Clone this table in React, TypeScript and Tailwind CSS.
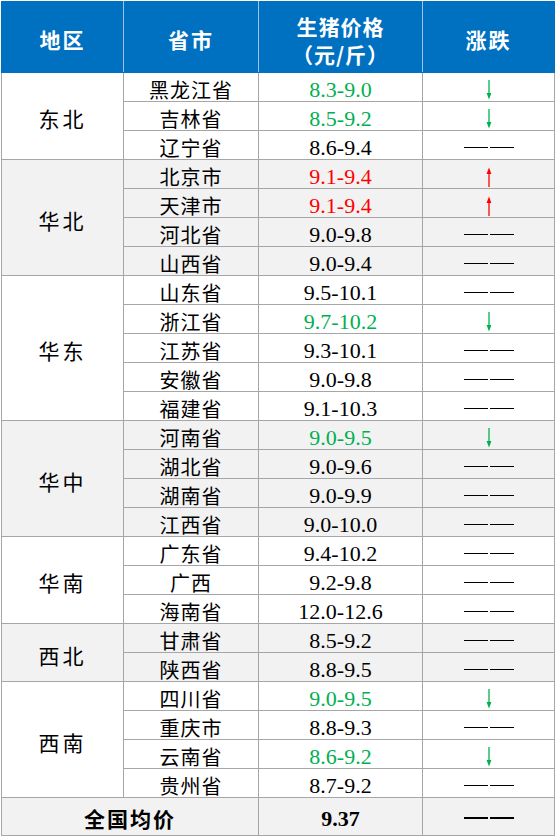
import React from "react";

type Trend = "up" | "down" | "flat";
type Row = { prov: string; price: string; trend: Trend };
type Group = { region: string; shaded: boolean; rows: Row[] };

const groups: Group[] = [
  {
    region: "东北",
    shaded: false,
    rows: [
      { prov: "黑龙江省", price: "8.3-9.0", trend: "down" },
      { prov: "吉林省", price: "8.5-9.2", trend: "down" },
      { prov: "辽宁省", price: "8.6-9.4", trend: "flat" },
    ],
  },
  {
    region: "华北",
    shaded: true,
    rows: [
      { prov: "北京市", price: "9.1-9.4", trend: "up" },
      { prov: "天津市", price: "9.1-9.4", trend: "up" },
      { prov: "河北省", price: "9.0-9.8", trend: "flat" },
      { prov: "山西省", price: "9.0-9.4", trend: "flat" },
    ],
  },
  {
    region: "华东",
    shaded: false,
    rows: [
      { prov: "山东省", price: "9.5-10.1", trend: "flat" },
      { prov: "浙江省", price: "9.7-10.2", trend: "down" },
      { prov: "江苏省", price: "9.3-10.1", trend: "flat" },
      { prov: "安徽省", price: "9.0-9.8", trend: "flat" },
      { prov: "福建省", price: "9.1-10.3", trend: "flat" },
    ],
  },
  {
    region: "华中",
    shaded: true,
    rows: [
      { prov: "河南省", price: "9.0-9.5", trend: "down" },
      { prov: "湖北省", price: "9.0-9.6", trend: "flat" },
      { prov: "湖南省", price: "9.0-9.9", trend: "flat" },
      { prov: "江西省", price: "9.0-10.0", trend: "flat" },
    ],
  },
  {
    region: "华南",
    shaded: false,
    rows: [
      { prov: "广东省", price: "9.4-10.2", trend: "flat" },
      { prov: "广西", price: "9.2-9.8", trend: "flat" },
      { prov: "海南省", price: "12.0-12.6", trend: "flat" },
    ],
  },
  {
    region: "西北",
    shaded: true,
    rows: [
      { prov: "甘肃省", price: "8.5-9.2", trend: "flat" },
      { prov: "陕西省", price: "8.8-9.5", trend: "flat" },
    ],
  },
  {
    region: "西南",
    shaded: false,
    rows: [
      { prov: "四川省", price: "9.0-9.5", trend: "down" },
      { prov: "重庆市", price: "8.8-9.3", trend: "flat" },
      { prov: "云南省", price: "8.6-9.2", trend: "down" },
      { prov: "贵州省", price: "8.7-9.2", trend: "flat" },
    ],
  },
];

const cjk = "font-['Noto_Sans_CJK_SC',sans-serif]";
const serif = "font-['Liberation_Serif','Noto_Sans_CJK_SC',serif]";

function Dash() {
  return (
    <span className="inline-flex items-center gap-[2px] align-middle">
      <span className="block h-[1.5px] w-[24px] bg-black" />
      <span className="block h-[1.5px] w-[24px] bg-black" />
    </span>
  );
}

function Arrow({ up }: { up: boolean }) {
  const color = up ? "#ff0000" : "#00b050";
  return (
    <svg width="8" height="20" viewBox="0 0 8 20" className="inline-block align-middle">
      {up ? (
        <>
          <line x1="4" y1="4" x2="4" y2="20" stroke={color} strokeWidth="1.3" />
          <path d="M1.6 7 L4 0.5 L6.4 7 Z" fill={color} />
        </>
      ) : (
        <>
          <line x1="4" y1="0" x2="4" y2="16" stroke={color} strokeWidth="1.3" />
          <path d="M1.6 13 L4 19.5 L6.4 13 Z" fill={color} />
        </>
      )}
    </svg>
  );
}

function TrendCell({ t }: { t: Trend }) {
  if (t === "flat") return <Dash />;
  return <Arrow up={t === "up"} />;
}

export default function App() {
  return (
    <div className="bg-white w-[556px] h-[837px] pt-[1px] pl-[1px]">
      <table className="border-collapse table-fixed w-[553px]">
        <colgroup>
          <col className="w-[122px]" />
          <col className="w-[135px]" />
          <col className="w-[164px]" />
          <col className="w-[132px]" />
        </colgroup>
        <thead>
          <tr className="h-[71px] bg-[#0070c0] text-white">
            <th className={`${cjk} text-[21px] font-bold tracking-[2px] pt-[6px] border border-[#0070c0] border-r-[#9dc3e6]`}>地区</th>
            <th className={`${cjk} text-[21px] font-bold tracking-[2px] pt-[6px] border border-[#0070c0] border-r-[#9dc3e6]`}>省市</th>
            <th className={`${cjk} text-[21px] font-bold leading-[28px] tracking-[1px] pt-[5px] border border-[#0070c0] border-r-[#9dc3e6]`}>
              生猪价格
              <br />
              （元/斤）
            </th>
            <th className={`${cjk} text-[21px] font-bold tracking-[2px] pt-[6px] border border-[#0070c0]`}>涨跌</th>
          </tr>
        </thead>
        <tbody>
          {groups.map((g) =>
            g.rows.map((r, i) => (
              <tr key={g.region + r.prov} className={`h-[29px] ${g.shaded ? "bg-[#f2f2f2]" : "bg-white"}`}>
                {i === 0 && (
                  <td
                    rowSpan={g.rows.length}
                    className={`${cjk} text-[21px] tracking-[3px] text-center text-black border border-[#a6a6a6] px-0 pb-0 pt-[6px]`}
                  >
                    {g.region}
                  </td>
                )}
                <td className={`${cjk} text-[20px] leading-[22px] tracking-[1px] text-center text-black border border-[#a6a6a6] px-0 pb-0 pt-[6px]`}>
                  {r.prov}
                </td>
                <td
                  className={`${serif} text-[22px] leading-[22px] text-center border border-[#a6a6a6] px-0 pb-0 pt-[6px] ${
                    r.trend === "down" ? "text-[#00b050]" : r.trend === "up" ? "text-[#ff0000]" : "text-black"
                  }`}
                >
                  {r.price}
                </td>
                <td className="text-center border border-[#a6a6a6] px-0 pb-0 pt-[3px] leading-[25px]">
                  <TrendCell t={r.trend} />
                </td>
              </tr>
            ))
          )}
          <tr className="h-[37px] bg-[#f2f2f2]">
            <td colSpan={2} className={`${cjk} text-[21px] font-bold tracking-[2px] text-center text-black border border-[#a6a6a6] px-0 pb-0 pt-[4px]`}>
              全国均价
            </td>
            <td className={`${serif} text-[22px] font-bold text-center text-black border border-[#a6a6a6] px-0 pb-0 pt-[4px]`}>9.37</td>
            <td className="text-center border border-[#a6a6a6] p-0">
              <Dash />
            </td>
          </tr>
        </tbody>
      </table>
    </div>
  );
}
